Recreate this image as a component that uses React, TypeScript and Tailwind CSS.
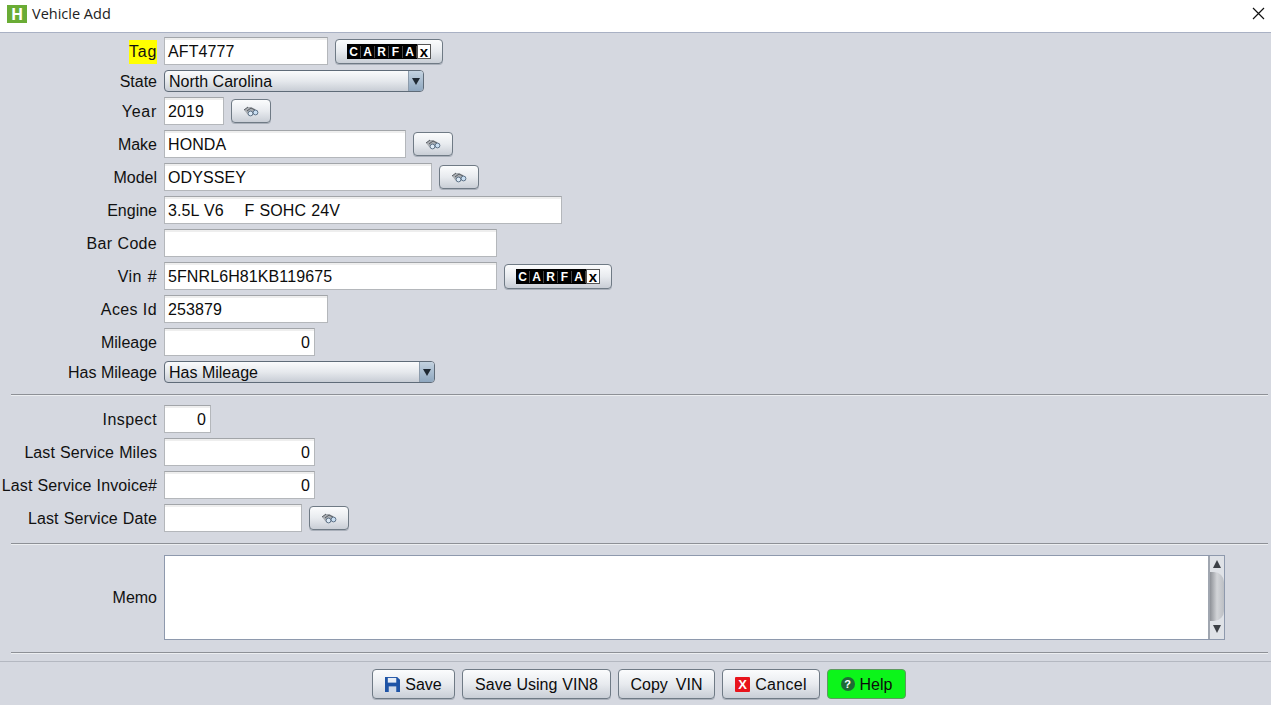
import React from "react";

const btn = "flex items-center justify-center rounded-[4px] border border-[#6f7a85] bg-gradient-to-b from-[#fbfcfd] via-[#e8ebef] to-[#c9ced6] shadow-[0_1px_0_#aab0ba]";

function Binoculars() {
  return (
    <svg width="16" height="11" viewBox="0 0 16 11">
      <path d="M1 4 L5 1 L8 1 L12 3 L14 5 L9 9 L5 9 Z" fill="#a9adb2" />
      <path d="M1 4 L5 1 M4 5 L8 2 M8 2 L12 4" stroke="#54595f" strokeWidth="1" fill="none" />
      <circle cx="7.5" cy="7.5" r="2.4" fill="#dce9f5" stroke="#5d7186" strokeWidth="1" />
      <circle cx="12.5" cy="6.5" r="2.4" fill="#c8def2" stroke="#5d7186" strokeWidth="1" />
    </svg>
  );
}

function FindBtn() {
  return (
    <button className={`${btn} ml-[7px] mt-[2px] h-[24px] w-[40px]`}>
      <Binoculars />
    </button>
  );
}

function Carfax() {
  return (
    <button className={`${btn} ml-[7px] mt-[2px] h-[25px] w-[108px]`}>
      <span className="flex h-[15px] w-[84px] items-center bg-black font-['Liberation_Sans',sans-serif] text-[12px] font-bold leading-none text-white">
        {["C", "A", "R", "F", "A"].map((c, i) => (
          <span key={i} className="w-[14px] border-r border-[#444] text-center">{c}</span>
        ))}
        <span className="flex h-[15px] w-[14px] items-end justify-center border border-[#555] bg-white text-[15px] leading-[12px] text-black">x</span>
      </span>
    </button>
  );
}

function Field({ w, value = "", right = false }: { w: number; value?: string; right?: boolean }) {
  return (
    <div
      style={{ width: w }}
      className={`flex h-[28px] items-center whitespace-pre border border-[#b4b7bb] border-t-[#a2a5a9] bg-white px-[3px] pt-[2px] text-[16px] tracking-[0.1px] text-[#0c0c0c] shadow-[inset_0_2px_0_#eeeeee] [word-spacing:0.6px] ${right ? "justify-end pr-[4px]" : ""}`}
    >
      {value}
    </div>
  );
}

function Select({ w, value }: { w: number; value: string }) {
  return (
    <div
      style={{ width: w }}
      className="flex h-[22px] overflow-hidden rounded-[4px] border border-[#5f6b78] bg-gradient-to-b from-[#fafbfc] via-[#e6e9ed] to-[#c8cdd5] text-[16px] text-[#0c0c0c]"
    >
      <span className="flex flex-1 items-center pl-[4px] pt-[2px]">{value}</span>
      <span className="flex w-[15px] items-center justify-center border-l border-[#8c9bab] bg-gradient-to-b from-[#c3d2e0] to-[#8fa7bf]">
        <svg width="8" height="7" viewBox="0 0 8 7"><path d="M0 0 H8 L4 7 Z" fill="#1f2933" /></svg>
      </span>
    </div>
  );
}

function Row({ label, hl, children, h = 28, mb = 5, lab = "tracking-[0.1px] [word-spacing:0.5px]" }: { label: string; hl?: boolean; children: React.ReactNode; h?: number; mb?: number; lab?: string }) {
  return (
    <div className="flex" style={{ height: h, marginBottom: mb }}>
      <div className={`flex w-[157px] shrink-0 items-center justify-end whitespace-nowrap pt-[2px] text-[16px] text-[#111] ${lab}`}>
        <span className={hl ? "bg-[#ffff00]" : ""}>{label}</span>
      </div>
      <div className="ml-[7px] flex items-start">{children}</div>
    </div>
  );
}

function Sep() {
  return <div className="ml-[11px] mr-[3px] h-[2px] border-t border-[#8d9096] bg-[#eceef1]" />;
}

export default function App() {
  return (
    <div className="flex h-[705px] w-[1271px] flex-col overflow-hidden bg-[#d5d8e0] font-['Liberation_Sans',Arial,sans-serif] text-[16px]">
      <div className="flex h-[33px] shrink-0 items-center border-b border-[#a9b1c4] bg-white pb-[5px]">
        <span className="ml-[7px] flex h-[18px] w-[20px] items-center justify-center bg-[#6aac35] font-['Open_Sans',sans-serif] text-[16px] font-bold leading-none text-white">H</span>
        <span className="ml-[5px] font-['Open_Sans',sans-serif] text-[14.5px] text-[#222]">Vehicle Add</span>
        <svg className="ml-auto mr-[6px]" width="13" height="13" viewBox="0 0 13 13">
          <path d="M1 1 L12 12 M12 1 L1 12" stroke="#111" strokeWidth="1.2" />
        </svg>
      </div>

      <div className="pt-[4px]">
        <Row label="Tag" hl lab="tracking-[0.7px]"><Field w={164} value="AFT4777" /><Carfax /></Row>
        <Row label="State" h={22} mb={5} lab=""><Select w={260} value="North Carolina" /></Row>
        <Row label="Year" lab="tracking-[0.7px]"><Field w={60} value="2019" /><FindBtn /></Row>
        <Row label="Make" lab=""><Field w={242} value="HONDA" /><FindBtn /></Row>
        <Row label="Model" lab=""><Field w={268} value="ODYSSEY" /><FindBtn /></Row>
        <Row label="Engine" lab=""><Field w={398} value="3.5L V6    F SOHC 24V" /></Row>
        <Row label="Bar Code" lab="tracking-[0.3px] [word-spacing:0.5px]"><Field w={333} /></Row>
        <Row label="Vin #" lab="tracking-[0.4px] [word-spacing:1px]"><Field w={333} value="5FNRL6H81KB119675" /><Carfax /></Row>
        <Row label="Aces Id" lab="tracking-[0.4px]"><Field w={164} value="253879" /></Row>
        <Row label="Mileage" lab=""><Field w={151} value="0" right /></Row>
        <Row label="Has Mileage" h={22} mb={11} lab=""><Select w={271} value="Has Mileage" /></Row>
        <Sep />
        <div className="h-[9px]" />
        <Row label="Inspect" lab="tracking-[0.4px]"><Field w={47} value="0" right /></Row>
        <Row label="Last Service Miles"><Field w={151} value="0" right /></Row>
        <Row label="Last Service Invoice#"><Field w={151} value="0" right /></Row>
        <Row label="Last Service Date" mb={11}><Field w={138} /><FindBtn /></Row>
        <Sep />
        <div className="h-[10px]" />
        <Row label="Memo" h={85} mb={12} lab="pb-[2px]">
          <div className="flex h-[85px] w-[1061px] border border-[#8e99ad] bg-white">
            <div className="flex-1" />
            <div className="flex w-[16px] flex-col items-center border-l-2 border-[#a0a6b0] bg-[#dfe2e7]">
              <svg className="mt-[4px]" width="8" height="8" viewBox="0 0 8 8"><path d="M4 0 L8 8 H0 Z" fill="#3c4046" /></svg>
              <div className="mt-[4px] h-[49px] w-full rounded-r-[10px] bg-gradient-to-r from-[#8f9298] via-[#d2d4d8] to-[#bcbfc4]" />
              <svg className="mt-[4px]" width="8" height="8" viewBox="0 0 8 8"><path d="M0 0 H8 L4 8 Z" fill="#3c4046" /></svg>
            </div>
          </div>
        </Row>
        <Sep />
      </div>

      <div className="mt-[7px] flex-1 border-t border-[#b4b8c1]">
        <div className="ml-[372px] mt-[7px] flex h-[30px] gap-[7px] text-[16px] text-[#0c0c0c]">
          <button className={`${btn} w-[83px] gap-[5px] border-[#4f86b8] shadow-[0_0_0_1px_#a9c6de]`}>
            <svg width="15" height="15" viewBox="0 0 16 16">
              <path d="M0 0 H13 L16 3 V16 H0 Z" fill="#1f54a6" />
              <rect x="3" y="1" width="9" height="5" fill="#e8edf5" />
              <rect x="4" y="10" width="8" height="6" fill="#cfd9e8" />
            </svg>
            <span className="pt-[2px]">Save</span>
          </button>
          <button className={`${btn} w-[149px]`}><span className="pt-[2px] [word-spacing:0.5px]">Save Using VIN8</span></button>
          <button className={`${btn} w-[97px]`}><span className="pt-[2px] [word-spacing:3.5px]">Copy VIN</span></button>
          <button className={`${btn} w-[98px] gap-[5px]`}>
            <span className="flex h-[15px] w-[15px] items-center justify-center rounded-[1px] bg-[#e8141c] text-[13px] font-bold leading-none text-white">X</span>
            <span className="pt-[2px] tracking-[0.3px]">Cancel</span>
          </button>
          <button className="flex w-[79px] items-center justify-center gap-[5px] rounded-[4px] border border-[#5f9a5f] bg-[#0cf51a]">
            <span className="flex h-[14px] w-[14px] items-center justify-center rounded-full bg-[#1d6b35] text-[11px] font-bold leading-none text-white">?</span>
            <span className="pt-[2px]">Help</span>
          </button>
        </div>
      </div>
    </div>
  );
}
